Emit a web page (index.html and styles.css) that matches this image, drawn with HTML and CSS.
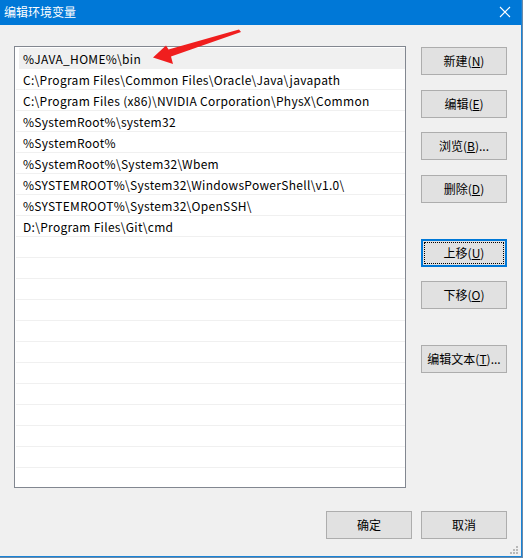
FILE: index.html
```html
<!DOCTYPE html>
<html lang="zh-CN">
<head>
<meta charset="utf-8">
<link rel="stylesheet" href="styles.css">
</head>
<body>
<div class="window">
  <div class="titlebar">
    <span class="title">编辑环境变量</span>
    <svg class="close" width="12" height="12" viewBox="0 0 12 12"><path d="M1 1 L11 11 M11 1 L1 11" stroke="#fff" stroke-width="1.1" fill="none"/></svg>
  </div>
  <div class="content">
    <div class="main">
      <div class="list">
        <div class="row hover">%JAVA_HOME%\bin</div>
        <div class="row">C:\Program Files\Common Files\Oracle\Java\javapath</div>
        <div class="row">C:\Program Files (x86)\NVIDIA Corporation\PhysX\Common</div>
        <div class="row">%SystemRoot%\system32</div>
        <div class="row">%SystemRoot%</div>
        <div class="row">%SystemRoot%\System32\Wbem</div>
        <div class="row">%SYSTEMROOT%\System32\WindowsPowerShell\v1.0\</div>
        <div class="row">%SYSTEMROOT%\System32\OpenSSH\</div>
        <div class="row">D:\Program Files\Git\cmd</div>
        <div class="row"></div><div class="row"></div><div class="row"></div>
        <div class="row"></div><div class="row"></div><div class="row"></div>
        <div class="row"></div><div class="row"></div><div class="row"></div>
        <div class="row"></div><div class="row"></div>
      </div>
      <div class="side">
        <button class="btn">新建(<u>N</u>)</button>
        <button class="btn g15">编辑(<u>E</u>)</button>
        <button class="btn g14">浏览(<u>B</u>)...</button>
        <button class="btn g15">删除(<u>D</u>)</button>
        <button class="btn focus g36"><span class="inner">上移(<u>U</u>)</span></button>
        <button class="btn g14">下移(<u>O</u>)</button>
        <button class="btn g36">编辑文本(<u>T</u>)...</button>
      </div>
    </div>
    <div class="footer">
      <button class="btn">确定</button>
      <button class="btn">取消</button>
    </div>
  </div>
  <svg class="grip" width="10" height="10" viewBox="0 0 10 10">
    <rect x="7" y="1" width="2" height="2" fill="#b8b8b8"/>
    <rect x="4" y="4" width="2" height="2" fill="#b8b8b8"/>
    <rect x="7" y="4" width="2" height="2" fill="#b8b8b8"/>
    <rect x="1" y="7" width="2" height="2" fill="#b8b8b8"/>
    <rect x="4" y="7" width="2" height="2" fill="#b8b8b8"/>
    <rect x="7" y="7" width="2" height="2" fill="#b8b8b8"/>
  </svg>
  <svg class="arrow" width="523" height="80" viewBox="0 0 523 80">
    <polygon points="153,57.5 166,45.5 168.5,49.5 239,29.5 241,32 171,56.5 173,64" fill="#f01e1e"/>
  </svg>
</div>
</body>
</html>
```
FILE: styles.css
```css
* { box-sizing: border-box; }
html, body { margin: 0; padding: 0; background: #6b8aa8; }
body { width: 523px; height: 558px; overflow: hidden; }
.window {
  position: relative;
  width: 522px;
  height: 557px;
  background: #f0f0f0;
  border-right: 1px solid #1883d7;
  border-bottom: 1px solid #1883d7;
  font-family: "Noto Sans CJK SC", "Noto Sans", sans-serif;
  font-size: 12px;
  color: #000;
}
.titlebar {
  height: 25px;
  background: #0078d7;
  display: flex;
  align-items: center;
  justify-content: space-between;
  padding: 0 10px 2px 4px;
}
.title { color: #fff; font-size: 12px; line-height: 16px; }
.close { display: block; }
.content { padding: 21px 14px 0 14px; }
.main { display: flex; gap: 15px; }
.list {
  width: 392px;
  height: 442px;
  border: 1px solid #828790;
  background: #fff;
  padding-top: 1px;
  overflow: hidden;
}
.row {
  height: 21px;
  border-bottom: 1px solid #f0f0f0;
  margin-left: 1px;
  padding-left: 7px;
  line-height: 21px;
  white-space: nowrap;
  font-size: 12px;
  letter-spacing: 0.3px;
  color: #000;
}
.row.hover { background: #f0f0f0; margin-left: 4px; padding-left: 4px; }
.side { display: flex; flex-direction: column; padding-top: 1px; }
.btn {
  width: 86px;
  height: 28px;
  background: #e1e1e1;
  border: 1px solid #adadad;
  font-family: "Noto Sans CJK SC", "Noto Sans", sans-serif;
  font-size: 12px;
  color: #000;
  padding: 0;
  margin: 0;
  display: flex;
  align-items: center;
  justify-content: center;
  line-height: 16px;
}
.btn u { text-decoration: underline; text-underline-offset: 1px; }
.g14 { margin-top: 14px; }
.g15 { margin-top: 15px; }
.g36 { margin-top: 36px; }
.btn.focus { border: 2px solid #0078d7; padding: 1px; }
.btn.focus .inner {
  width: 100%;
  height: 100%;
  border: 1px dotted #000;
  display: flex;
  align-items: center;
  justify-content: center;
}
.footer {
  display: flex;
  justify-content: flex-end;
  gap: 9px;
  margin-top: 23px;
}
.grip { position: absolute; right: 2px; bottom: 1px; }
.arrow { position: absolute; left: 0; top: 0; pointer-events: none; }
```
